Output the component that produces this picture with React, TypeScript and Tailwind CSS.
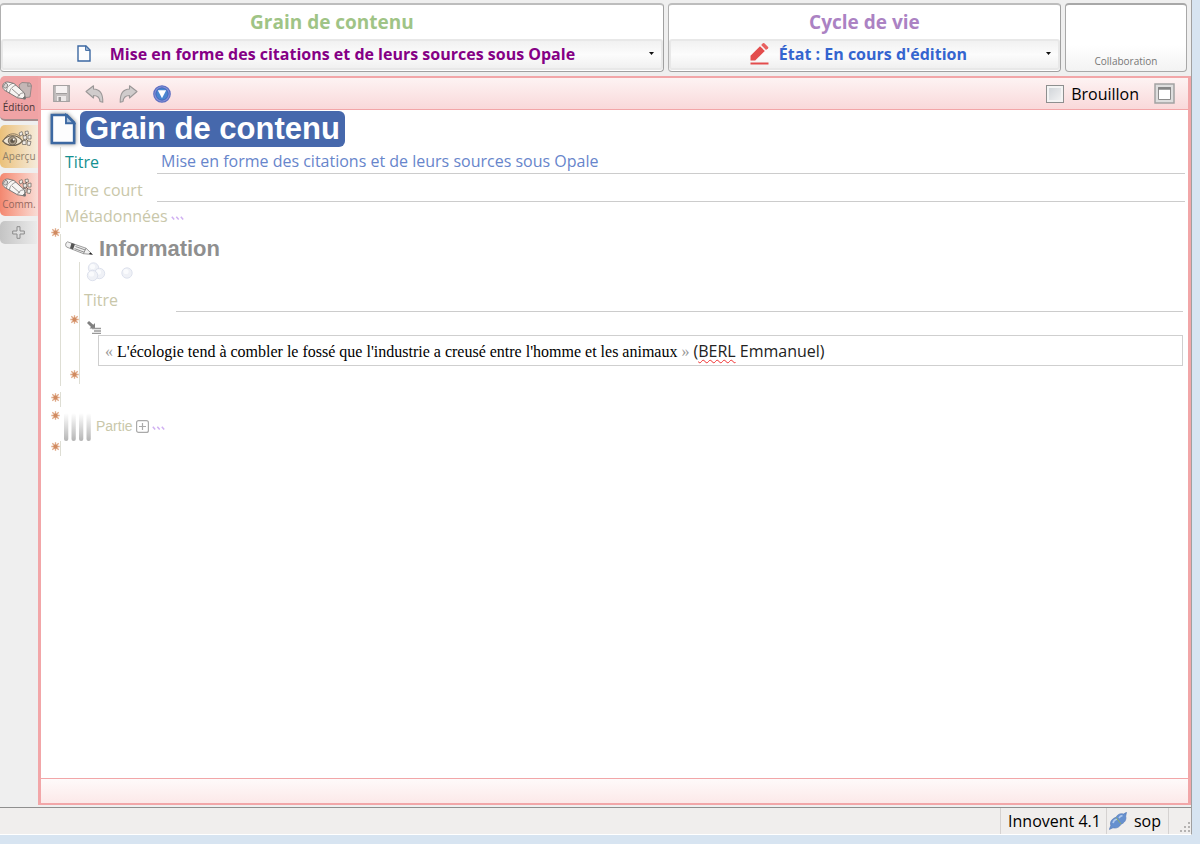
import { useState } from 'react';
import type { ReactNode } from 'react';

function PageIcon({ className }: { className: string }) {
  return (
    <svg className={className} viewBox="0 0 14 17" aria-hidden="true">
      <path d="M1 1h8l4 4v11H1z" fill="#fdfdfe" stroke="#3c68a2" strokeWidth="1.4" />
      <path d="M8.6 1v4.4H13z" fill="#a9c0dc" stroke="#3c68a2" strokeWidth="1" />
    </svg>
  );
}

function RedPencilIcon() {
  return (
    <svg className="h-[23px] w-[19px] shrink-0" viewBox="0 0 19 23" aria-hidden="true">
      <path d="M.5 13.8 10 4.2l4.8 4.7-9.6 9.6H.5z" fill="#e34c4c" />
      <path d="m11.2 3 1.6-1.7q.8-.7 1.6 0l3.7 3.6q.6.7 0 1.4L16 8z" fill="#e8605f" />
      <path d="M.5 21.5h18" stroke="#e34c4c" strokeWidth="2" />
    </svg>
  );
}

function FloppyIcon() {
  return (
    <svg className="h-[17px] w-[17px]" viewBox="0 0 17 17" aria-hidden="true">
      <path d="M.7.7h15.6v15.6H.7z" fill="#c3bfbf" stroke="#a5a2a2" strokeWidth="1.2" />
      <path d="M3 1h11v7.500H3z" fill="#f6f2f2" />
      <path d="M3 8.500h11" stroke="#a09d9d" />
      <path d="M4 11h9v5H4z" fill="#ece8e8" />
      <path d="M5.500 12h2.500v4H5.500z" fill="#9a9898" />
    </svg>
  );
}

function CurvedArrowIcon({ className = '' }: { className?: string }) {
  return (
    <svg className={`h-[18px] w-[19px] ${className}`} viewBox="0 0 19 18" aria-hidden="true">
      <path
        d="M1 6.500 8.500.8V4c6 .2 9.500 5 9.300 13.200l-2.800-.7c-.4-4-2.500-6-6.500-6V13z"
        fill="#d0cccc"
        stroke="#9a9797"
        strokeWidth="1.1"
        strokeLinejoin="round"
      />
    </svg>
  );
}

function DownCircleIcon() {
  return (
    <svg className="h-[18px] w-[18px]" viewBox="0 0 18 18" aria-hidden="true">
      <circle cx="9" cy="9" r="8.200" fill="#8b97dc" stroke="#5f70c2" strokeWidth="1.3" />
      <circle cx="9" cy="9" r="6.200" fill="#4a85d0" stroke="#3f5db4" strokeWidth=".8" />
      <path d="M4.800 5.200h8.400L9 13.200z" fill="#fff" />
    </svg>
  );
}

function Pages() {
  return (
    <g fill="#c4b7b6" stroke="#8f8483" strokeWidth=".9">
      <path d="m17 4 3-2.500 8 .5 1.500 2.500L28 16l-8 1z" />
      <path d="m26 1.800-.3 3.500 3.700-.4" fill="none" />
    </g>
  );
}

function Crumbs() {
  return (
    <g fill="#efebe6" stroke="#77716b" strokeWidth=".8">
      <path d="m17 3 3-1.500 1 3-3 1.500zM23 1.500l3-.5.500 3-3 .500zM21 6l3.500-.5.5 3.500-3.500.5zM26 5.500l3-.5v4h-3zM20 11l4-.5v4h-3.500zM25.500 11l3.500.5-1 4-3-.5z" />
      <path d="m20.500 4.500 1 1.500m3.500-2-1.500 1.500M24 9l2 2m-4-1.500v1.500" stroke="#55504b" />
    </g>
  );
}

function TabPencil() {
  return (
    <g stroke="#7d7a79" strokeLinejoin="round">
      <path d="M.7 5C1 2 3.500.8 6 1l6 1.500 10.500 9.500.8 6-7.800-1.200L3 9.500C1.300 8.300.6 6.800.7 5z" fill="#f7f5f3" />
      <path d="m4.500 10.500c0-4 2.500-6.500 6.500-8.300M7.500 12.500c0-4 2.500-6.700 6.500-8.500M10 8l8 7m-2.500 1.700c.5-2.700 3-4.700 6.500-5" fill="none" strokeWidth=".8" />
      <ellipse cx="3.600" cy="4.800" rx="1.800" ry="2.500" fill="#dad6d4" strokeWidth=".8" transform="rotate(30 3.600 4.800)" />
      <path d="m20.500 17.500 2.800.5-.3-2.600z" fill="#555" />
    </g>
  );
}

function TabEye() {
  return (
    <g stroke="#6e6252">
      <path d="M.7 11C6 4 15 4 20.500 11 15 17 6 17 .7 11z" fill="#f0e6d4" strokeWidth="1.2" />
      <path d="M2.500 8.500C7 2.500 14 2.500 18.500 7" fill="none" strokeWidth=".8" />
      <circle cx="10.500" cy="10.800" r="4.200" fill="#a99d8b" />
      <circle cx="10.500" cy="10.800" r="1.900" fill="#5c5348" />
      <circle cx="11.700" cy="9.500" r=".9" fill="#fff" stroke="none" />
    </g>
  );
}

function SmallPencil() {
  return (
    <svg className="h-[15px] w-[28px] shrink-0" viewBox="0 0 28 15" aria-hidden="true">
      <path d="M2.500.8 21 7.200l6.500 6.300-9-.8L1.500 6C0 4.500.5 1.500 2.500.8z" fill="#f1f1f1" stroke="#858585" strokeWidth=".8" />
      <path d="M6.500 2 5 7.300l3 1.200 2-5.200z" fill="#555" />
      <path d="m10.500 5.500 9.500 3.400m-10.500-1.300 9.500 3.500M21 7.200l-2.500 5.500" stroke="#777" strokeWidth=".8" fill="none" />
      <path d="m27.500 13.500-3.700-.4 1.700-1.700z" fill="#222" />
    </svg>
  );
}

function Ball({ cx, cy }: { cx: number; cy: number }) {
  return (
    <g>
      <circle cx={cx} cy={cy} r="5.200" fill="#eff1f6" stroke="#dadfeb" strokeWidth=".9" />
      <circle cx={cx - 1} cy={cy - 1.5} r="2.600" fill="#fafbfd" />
    </g>
  );
}

function Star({ className }: { className: string }) {
  return (
    <svg className={`absolute h-[9px] w-[9px] ${className}`} viewBox="0 0 8 8" aria-hidden="true">
      <path d="M4 .3v7.400M.3 4h7.400M1.200 1.200l5.600 5.600M6.800 1.200 1.200 6.800" stroke="#dfa988" strokeWidth="1.200" />
      <circle cx="4" cy="4" r="1.800" fill="#d08a60" />
    </svg>
  );
}

function MoreDots() {
  return (
    <svg className="h-[5px] w-[13px]" viewBox="0 0 13 5" aria-hidden="true">
      <path d="m.8.8 2.400 2.800M5.300.8l2.400 2.800M9.800.8l2.400 2.800" stroke="#d0b0f2" strokeWidth="1.500" />
    </svg>
  );
}

function HeaderCard({ title, titleClass, className, children }: { title: string; titleClass: string; className: string; children: ReactNode }) {
  return (
    <section className={`flex flex-col rounded-[4px] border border-t-2 border-t-[#bdbdbd] border-r-[#a0a0a0] border-b-[#a0a0a0] border-l-[#b0b0b0] bg-white pb-px ${className}`}>
      <h2 className={`text-center text-[19px] leading-[34px] font-bold ${titleClass}`}>{title}</h2>
      <button
        type="button"
        aria-haspopup="menu"
        className="flex h-[31px] w-full items-center rounded-[3px] border-2 border-[#e8e8e8] bg-linear-to-b from-[#f1f1f1] via-[#fcfcfc] to-[#f0f0f0] pr-[7px] pb-[2px]"
      >
        {children}
        <svg className="h-[3px] w-[5px] shrink-0" viewBox="0 0 5 3" aria-hidden="true">
          <path d="M0 0h5L2.500 3z" fill="#111" />
        </svg>
      </button>
    </section>
  );
}

const tabs = [
  {
    id: 'edition',
    label: 'Édition',
    style: 'mb-1 h-[45px] rounded-l-[5px] border-b-2 border-[#a58e8e] bg-[#f0a3a5] text-[#4b3535]',
    icon: <><Pages /><TabPencil /></>,
  },
  {
    id: 'apercu',
    label: 'Aperçu',
    style: 'mb-[5px] h-[43px] rounded-l-[5px] bg-linear-to-r from-[#ebc078] to-[#f5ecdd] text-[#8f8069]',
    icon: <><Crumbs /><TabEye /></>,
  },
  {
    id: 'comm',
    label: 'Comm.',
    style: 'mb-[5px] h-[43px] rounded-l-[5px] bg-linear-to-r from-[#f3876f] to-[#f8ddd7] text-[#95675d]',
    icon: <><Crumbs /><TabPencil /></>,
  },
];

const fieldClass = 'min-w-0 flex-1 border-b border-[#cccccc] bg-transparent px-1 outline-none';

export default function App() {
  const [activeTab, setActiveTab] = useState('edition');
  const [draft, setDraft] = useState(false);

  return (
    <div className="flex min-h-screen flex-col bg-[#d7e4f1] pr-2 pb-[9px] font-['Open_Sans','Noto_Sans',sans-serif] text-[16px] text-black">
      <div className="flex flex-1 flex-col border-r border-b border-r-[#a0a0a0] border-b-white bg-[#efefef]">
        <header className="flex gap-1 pt-[3px] pr-1">
          <HeaderCard title="Grain de contenu" titleClass="text-[#9fc486]" className="flex-[665]">
            <span className="flex flex-1 items-center justify-center gap-[19px]">
              <PageIcon className="h-[17px] w-[14px] shrink-0" />
              <span className="font-bold text-[#850085]">Mise en forme des citations et de leurs sources sous Opale</span>
            </span>
          </HeaderCard>
          <HeaderCard title="Cycle de vie" titleClass="text-[#ab82c3]" className="flex-[393]">
            <span className="flex flex-1 items-center justify-center gap-[10px]">
              <RedPencilIcon />
              <span className="font-bold text-[#3565cf]">État : En cours d'édition</span>
            </span>
          </HeaderCard>
          <section className="flex w-[122px] items-end justify-center rounded-[4px] border border-t-2 border-[#a8a8a8] bg-linear-to-b from-white from-60% to-[#f3f3f3]">
            <h2 className="pb-[3px] text-[10px] leading-[14px] text-[#777]">Collaboration</h2>
          </section>
        </header>

        <div className="mt-1 flex flex-1">
          <nav className="w-[38px] shrink-0" aria-label="Vues">
            {tabs.map((tab) => (
              <button
                key={tab.id}
                type="button"
                aria-pressed={activeTab === tab.id}
                onClick={() => setActiveTab(tab.id)}
                className={`flex w-[38px] flex-col items-center overflow-hidden pt-[5px] text-[10px] leading-[14px] ${tab.style}`}
              >
                <svg className="h-[19px] w-[34px] shrink-0" viewBox="0 0 34 19" aria-hidden="true">{tab.icon}</svg>
                <span>{tab.label}</span>
              </button>
            ))}
            <button
              type="button"
              aria-label="Ajouter une vue"
              className="flex h-[23px] w-[37px] items-center justify-center rounded-l-[5px] bg-linear-to-r from-[#c4c4c4] to-[#ebebeb]"
            >
              <svg className="h-[13px] w-[13px]" viewBox="0 0 13 13" aria-hidden="true">
                <path d="M5 .7h3V5h4.300v3H8v4.300H5V8H.7V5H5z" fill="#ddd" stroke="#8b8b8b" />
              </svg>
            </button>
          </nav>

          <main className="flex min-w-0 flex-1 flex-col border-x-[3px] border-y-2 border-[#f2a6a8] bg-white">
            <div className="flex h-[32px] items-center border-b border-[#f2a6a8] bg-linear-to-b from-[#fdf3f3] to-[#f9d9da] pr-[13px] pl-[12px]">
              <div className="flex items-center gap-[15px]">
                <button type="button" aria-label="Enregistrer"><FloppyIcon /></button>
                <button type="button" aria-label="Annuler"><CurvedArrowIcon /></button>
                <button type="button" aria-label="Rétablir"><CurvedArrowIcon className="-scale-x-100" /></button>
                <button type="button" aria-label="Plus d'actions"><DownCircleIcon /></button>
              </div>
              <label className="ml-auto flex items-center gap-[7px]">
                <input
                  type="checkbox"
                  checked={draft}
                  onChange={(e) => setDraft(e.target.checked)}
                  className="h-[18px] w-[18px] appearance-none border border-[#8e8f8f] bg-linear-to-br from-[#cdd1d6] to-[#f6f6f6] shadow-[inset_0_0_0_2px_#f4f4f4] checked:bg-[#3d6fbf]"
                />
                Brouillon
              </label>
              <button type="button" aria-label="Agrandir" className="ml-[15px]">
                <svg className="h-[21px] w-[21px]" viewBox="0 0 21 21" aria-hidden="true">
                  <path d="M1 1h19v19H1z" fill="#dedede" stroke="#a3a3a3" strokeWidth="1.500" />
                  <path d="M4.500 4.500h12v12h-12z" fill="#fff" stroke="#8c8c8c" />
                  <path d="M4 5.500h13" stroke="#858585" strokeWidth="2.500" />
                </svg>
              </button>
            </div>

            <div className="flex-1 pt-px pr-[3px]">
              <div className="flex items-center pl-[9px]">
                <PageIcon className="h-[32px] w-[26px] drop-shadow-[0_0_2px_#888]" />
                <h1 className="ml-1 rounded-[6px] bg-[#4668ac] px-[5px] font-['Liberation_Sans',Arial,sans-serif] text-[31px] leading-[36px] font-bold text-white">
                  Grain de contenu
                </h1>
              </div>

              <div className="ml-[19px] border-l border-[#deded4] pl-1">
                <div className="flex h-[27px]">
                  <label htmlFor="titre" className="w-[92px] pt-[3px] text-[#149090]">Titre</label>
                  <input id="titre" defaultValue="Mise en forme des citations et de leurs sources sous Opale" className={`${fieldClass} pt-[2px] text-[#6785cb]`} />
                </div>
                <div className="flex h-[28px]">
                  <label htmlFor="titre-court" className="w-[92px] pt-[4px] text-[#c9c7aa]">Titre court</label>
                  <input id="titre-court" className={fieldClass} />
                </div>
                <button type="button" className="flex h-[26px] items-center gap-[3px] pt-[2px] text-[#c9c7aa]">
                  Métadonnées
                  <span className="pt-1"><MoreDots /></span>
                </button>
              </div>

              <section className="relative mt-[6px] ml-[19px] border-l border-[#deded4] pb-[2px] pl-1">
                <Star className="-top-[6px] -left-[10px]" />
                <div className="flex h-[28px] items-center gap-[6px]">
                  <SmallPencil />
                  <h2 className="font-['Liberation_Sans',Arial,sans-serif] text-[22px] font-bold text-[#8f8f8f]">Information</h2>
                </div>
                <div className="mr-[2px] ml-[14px] border-l border-[#deded4] pb-[18px]">
                  <div className="flex h-[24px] gap-[15px] pl-[6px]">
                    <svg className="h-[20px] w-[20px]" viewBox="0 0 20 20" aria-hidden="true">
                      <Ball cx={7.500} cy={6} />
                      <Ball cx={13.500} cy={11.500} />
                      <Ball cx={6.500} cy={13.500} />
                    </svg>
                    <svg className="h-[20px] w-[12px]" viewBox="0 0 12 20" aria-hidden="true">
                      <Ball cx={6} cy={11} />
                    </svg>
                  </div>
                  <div className="flex h-[26px] pl-1">
                    <label htmlFor="info-titre" className="w-[92px] pt-[2px] text-[#c9c7aa]">Titre</label>
                    <input id="info-titre" className={fieldClass} />
                  </div>
                  <div className="relative pt-[8px] pl-[6px]">
                    <Star className="top-[3px] -left-[10px]" />
                    <svg className="h-[14px] w-[15px]" viewBox="0 0 15 14" aria-hidden="true">
                      <path d="m1 3 2-2 4.300 3.700L9 3v5.500H3.500L5 7z" fill="#808080" />
                      <path d="M6 8.500h9M8 11h7M6 13.300h9" stroke="#999" strokeWidth="1.300" />
                    </svg>
                  </div>
                  <div className="relative mt-px pl-[18px]">
                    <p
                      contentEditable
                      suppressContentEditableWarning
                      spellCheck={false}
                      role="textbox"
                      aria-label="Texte"
                      className="border border-[#cfcfcf] px-[6px] pt-[5px] pb-[3px] leading-[21px] text-[#222] outline-none"
                    >
                      <span className="font-['Liberation_Serif',serif]">
                        <span className="text-[#999]">« </span>
                        <span className="text-black">L'écologie tend à combler le fossé que l'industrie a creusé entre l'homme et les animaux</span>
                        <span className="text-[#999]"> » </span>
                      </span>
                      (<span className="underline decoration-[#f03030] decoration-wavy decoration-1 underline-offset-2">BERL</span> Emmanuel)
                    </p>
                    <Star className="-bottom-[13px] -left-[10px]" />
                  </div>
                </div>
              </section>

              <div className="relative mt-[6px] ml-[19px] h-[15px] border-l border-[#deded4]">
                <Star className="top-px -left-[10px]" />
              </div>

              <section className="relative mt-[5px] ml-[19px] flex items-center pl-1">
                <Star className="-top-px -left-[9px]" />
                <svg className="h-[29px] w-[27px]" viewBox="0 0 27 29" aria-hidden="true">
                  <defs>
                    <linearGradient id="bars" x1="0" y1="0" x2="0" y2="1">
                      <stop offset="0" stopColor="#fff" />
                      <stop offset="1" stopColor="#b5b5b5" />
                    </linearGradient>
                  </defs>
                  {[0, 7.5, 15, 22.5].map((x) => (
                    <rect key={x} x={x} y="1" width="4.300" height="28" rx="2" fill="url(#bars)" />
                  ))}
                </svg>
                <button type="button" className="ml-[5px] flex items-center gap-[3px] font-['Liberation_Sans',Arial,sans-serif] text-[14px] text-[#c9c7aa]">
                  Partie
                  <svg className="h-[13px] w-[13px]" viewBox="0 0 13 13" aria-hidden="true">
                    <rect x=".6" y=".6" width="11.800" height="11.800" rx="2" fill="none" stroke="#aaa" strokeWidth="1.200" />
                    <path d="M6.500 3v7M3 6.500h7" stroke="#aaa" strokeWidth="1.200" />
                  </svg>
                  <span className="pt-1"><MoreDots /></span>
                </button>
              </section>

              <div className="relative ml-[19px] h-[15px] border-l border-[#deded4]">
                <Star className="top-px -left-[10px]" />
              </div>
            </div>

            <div className="h-[25px] border-t border-[#f2a6a8] bg-linear-to-b from-[#fefafa] to-[#fce9e9]" />
          </main>
        </div>

        <footer className="mt-[2px] flex h-[27px] items-stretch justify-end border-t border-[#8f8f8f] bg-[#f0eeed] leading-[26px]">
          <span className="border-l border-[#d5d2d1] pr-[5px] pl-[7px]">Innovent 4.1</span>
          <span className="flex items-center gap-[7px] border-l border-[#d5d2d1] pr-[7px] pl-[2px]">
            <svg className="h-[18px] w-[18px]" viewBox="0 0 18 18" aria-hidden="true">
              <path d="m.3 17.500 1.500-4C.5 9.500 3.500 6.300 7 5.300 8.500 2.300 11.500 1 14.500 2L17.500.3l-.8 3.900c1 3.500-1.200 6.800-4.700 8-1.500 3-4.700 4.500-8 3.600z" fill="#6690cf" stroke="#5277b4" strokeWidth=".6" />
              <path d="M4 11c.5-2 2-3.500 4-4M10 6c.8-1.500 2-2.300 3.500-2.400" fill="none" stroke="#b0c9ec" strokeWidth="1.600" />
              <path d="m7 5.500 5 6.500" stroke="#8fae6a" />
            </svg>
            sop
          </span>
          <span className="flex w-[23px] items-end justify-end border-l border-[#d5d2d1]">
            <svg className="h-[13px] w-[12px]" viewBox="0 0 12 13" aria-hidden="true">
              <path d="M9 1h2v2H9zM5 5h2v2H5zM9 5h2v2H9zM1 9h2v2H1zM5 9h2v2H5zM9 9h2v2H9z" fill="#b5b3b2" />
            </svg>
          </span>
        </footer>
      </div>
    </div>
  );
}
